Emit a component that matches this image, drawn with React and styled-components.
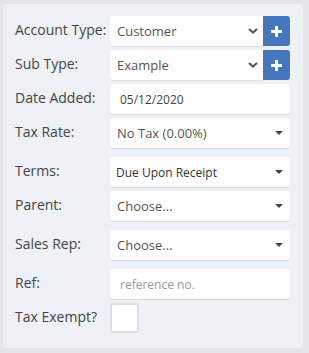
import React from "react";
import styled, { createGlobalStyle } from "styled-components";

const GlobalStyle = createGlobalStyle`
  html, body { margin: 0; padding: 0; }
  body {
    background: #e4e7ea;
    font-family: "Open Sans", "Noto Sans", sans-serif;
    width: 309px;
    height: 353px;
    overflow: hidden;
  }
`;

const Panel = styled.div`
  margin: 4px 0 0 3px;
  width: 300px;
  height: 344px;
  box-sizing: border-box;
  background: #eef1f6;
  border-radius: 4px;
  padding: 12px 13px 0 12px;
`;

const Row = styled.div`
  display: flex;
  align-items: flex-start;
  margin-bottom: ${(p) => p.$gap}px;
`;

const Label = styled.div`
  width: 95px;
  flex: none;
  font-size: 14px;
  line-height: 19px;
  padding-top: 4px;
  color: #444;
  white-space: nowrap;
`;

const Control = styled.div`
  flex: 1;
  display: flex;
  height: 30px;
`;

const Field = styled.div`
  flex: 1;
  display: flex;
  align-items: center;
  height: 30px;
  box-sizing: border-box;
  background: #fff;
  border-radius: ${(p) => (p.$joined ? "3px 0 0 3px" : "3px")};
  box-shadow: 0 1px 1px rgba(0, 0, 0, 0.09);
  padding-left: ${(p) => p.$pad || 7}px;
  padding-right: ${(p) => p.$padRight || 9}px;
  font-size: ${(p) => p.$size || 13}px;
  color: ${(p) => p.$color || "#555"};
  white-space: nowrap;
`;

const Value = styled.span`
  flex: 1;
`;

const AddButton = styled.div`
  width: 27px;
  height: 30px;
  flex: none;
  background: #4677bd;
  border-radius: 0 3px 3px 0;
  display: flex;
  align-items: center;
  justify-content: center;
`;

const Checkbox = styled.div`
  width: 29px;
  height: 30px;
  box-sizing: border-box;
  background: #fff;
  border: 2px solid #dedfe1;
  border-radius: 3px;
`;

const Chevron = () => (
  <svg width="10" height="6" viewBox="0 0 10 6">
    <path d="M1 1 L5 4.6 L9 1" fill="none" stroke="#555" strokeWidth="2" />
  </svg>
);

const Caret = () => (
  <svg width="8" height="4" viewBox="0 0 8 4">
    <path d="M0 0 L8 0 L4 4 Z" fill="#444" />
  </svg>
);

const Plus = () => (
  <svg width="11" height="11" viewBox="0 0 11 11">
    <path d="M4 0 H7 V4 H11 V7 H7 V11 H4 V7 H0 V4 H4 Z" fill="#fff" />
  </svg>
);

const NativeSelect = ({ value }) => (
  <Control>
    <Field $joined $padRight={5}>
      <Value>{value}</Value>
      <Chevron />
    </Field>
    <AddButton>
      <Plus />
    </AddButton>
  </Control>
);

const CaretSelect = ({ value, size, color, pad }) => (
  <Control>
    <Field $size={size} $color={color} $pad={pad} $padRight={7}>
      <Value>{value}</Value>
      <Caret />
    </Field>
  </Control>
);

export default function App() {
  return (
    <>
      <GlobalStyle />
      <Panel>
        <Row $gap={4}>
          <Label>Account Type:</Label>
          <NativeSelect value="Customer" />
        </Row>
        <Row $gap={4}>
          <Label>Sub Type:</Label>
          <NativeSelect value="Example" />
        </Row>
        <Row $gap={4}>
          <Label>Date Added:</Label>
          <Control>
            <Field $pad={10} $color="#444" $size={12}>05/12/2020</Field>
          </Control>
        </Row>
        <Row $gap={9}>
          <Label>Tax Rate:</Label>
          <CaretSelect value="No Tax (0.00%)" />
        </Row>
        <Row $gap={4}>
          <Label>Terms:</Label>
          <CaretSelect value="Due Upon Receipt" size={12} color="#333" pad={6} />
        </Row>
        <Row $gap={9}>
          <Label>Parent:</Label>
          <CaretSelect value="Choose..." />
        </Row>
        <Row $gap={9}>
          <Label>Sales Rep:</Label>
          <CaretSelect value="Choose..." />
        </Row>
        <Row $gap={4}>
          <Label>Ref:</Label>
          <Control>
            <Field $pad={10} $color="#999" $size={12}>reference no.</Field>
          </Control>
        </Row>
        <Row $gap={0}>
          <Label>Tax Exempt?</Label>
          <Checkbox />
        </Row>
      </Panel>
    </>
  );
}
